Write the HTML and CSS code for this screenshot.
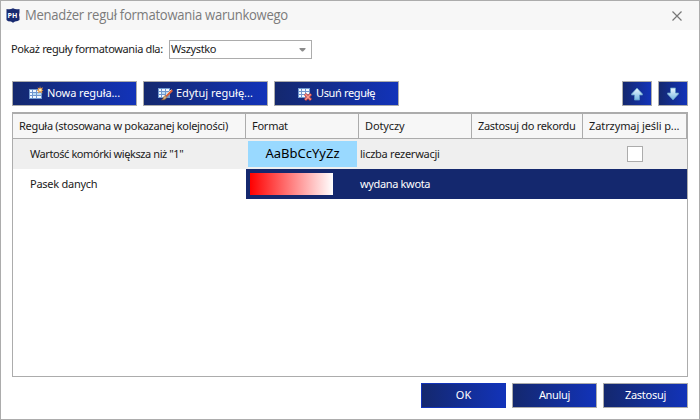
FILE: index.html
```
<!DOCTYPE html>
<html lang="pl">
<head>
<meta charset="utf-8">
<title>Menadżer reguł formatowania warunkowego</title>
<link rel="stylesheet" href="styles.css">
</head>
<body>
<div class="window">
  <header class="titlebar">
    <svg class="logo" width="14" height="15" viewBox="0 0 14 15"><path d="M.5 1Q4 2 7 .3Q10 2 13.500 1V4.500Q12.600 7 13.500 9V12Q12 13.300 9 13.500L7 14.700L5 13.500Q1.500 13.500 .5 12V2Z" fill="#182a70"/><text x="1.500" y="9.600" class="logo-text">PH</text></svg>
    <h1 class="title">Menadżer reguł formatowania warunkowego</h1>
    <svg class="close" width="10" height="10" viewBox="0 0 10 10"><path d="M.5 .5L9.500 9.500M9.500 .5L.5 9.500" stroke="#777" stroke-width="1.200"/></svg>
  </header>
  <div class="filter">
    <div class="filter-label"><span class="t1">Pokaż reguły formatowania dla:</span></div>
    <div class="select"><span class="t2">Wszystko</span><svg width="7" height="4" viewBox="0 0 7 4"><path d="M.5 0H6.500V1L4 3.500H3L.5 1Z" fill="#8b8b8b"/></svg></div>
  </div>
  <div class="toolbar">
    <button class="btn tool b1"><svg width="16" height="16" viewBox="0 0 16 16"><path d="M1 3H14V13H1Z" fill="#7097ce"/><path d="M2 4H4V6H2ZM5 4H8V6H5ZM9 4H13V6H9ZM2 7H4V9H2ZM2 10H4V12H2ZM5 10H8V12H5ZM9 10H13V12H9Z" fill="#f1f8ff"/><path d="M5 7H8V9H5ZM9 7H13V9H9Z" fill="#b9dcf7"/><path d="M12 0L12.700 2.300L15 1.300L14 3.500L15.500 4.500L14 5L14.500 7.500L12 6L10 7.500L10.500 5L8.500 4.500L10.300 3.500L9.500 1.500L11.500 2.300Z" fill="#e69a48"/><circle cx="12.300" cy="4" r="1.300" fill="#fff0b0"/></svg><span class="t3">Nowa reguła...</span></button>
    <button class="btn tool b2"><svg width="16" height="16" viewBox="0 0 16 16"><path d="M1 2H13V12H1Z" fill="#7097ce"/><path d="M2 3H4V5H2ZM5 3H8V5H5ZM9 3H12V5H9ZM2 6H4V8H2ZM2 9H4V11H2ZM5 9H8V11H5Z" fill="#f1f8ff"/><path d="M5 6H8V8H5ZM9 6H12V8H9Z" fill="#b9dcf7"/><path d="M14.500 3.500L16 5L10 11L8.500 9.500Z" fill="#d85e3b"/><path d="M14.500 3.500L9 9" stroke="#ffc39a"/><path d="M8 9.500L10 11.500Q8 14.500 4.500 14Q6.500 13 6.500 11Z" fill="#d5aa70" stroke="#80502d" stroke-width=".5"/></svg><span class="t4">Edytuj regułę...</span></button>
    <button class="btn tool b3"><svg width="16" height="16" viewBox="0 0 16 16"><path d="M1 2H13V12H1Z" fill="#7097ce"/><path d="M2 3H4V5H2ZM5 3H8V5H5ZM9 3H12V5H9ZM2 6H4V8H2ZM5 6H8V8H5ZM9 6H12V8H9ZM2 9H4V11H2ZM5 9H8V11H5Z" fill="#f1f8ff"/><path d="M8 8L14 14M14 8L8 14" stroke="#c9403a" stroke-width="3"/><path d="M8.300 8.300L13.700 13.700M13.700 8.300L8.300 13.700" stroke="#f59a90" stroke-width="1.400"/></svg><span class="t5">Usuń regułę</span></button>
    <span class="spacer"></span>
    <button class="btn arrow" aria-label="W górę"><svg width="14" height="16" viewBox="0 0 14 16"><defs><linearGradient id="a" x2="0" y2="1"><stop stop-color="#eefaff"/><stop offset="1" stop-color="#75b7e2"/></linearGradient></defs><path d="M7 2L12.500 8V9H9.500V14H4.500V9H1.500V8Z" fill="url(#a)" stroke="#5f9bc7" stroke-width=".8"/></svg></button>
    <button class="btn arrow" aria-label="W dół"><svg width="14" height="16" viewBox="0 0 14 16"><path d="M7 14L12.500 8V7H9.500V2H4.500V7H1.500V8Z" fill="url(#a)" stroke="#5f9bc7" stroke-width=".8"/></svg></button>
  </div>
  <main class="grid">
    <div class="row head">
      <div><span class="t6">Reguła (stosowana w pokazanej kolejności)</span></div><div><span class="t7">Format</span></div><div><span class="t8">Dotyczy</span></div><div><span class="t9">Zastosuj do rekordu</span></div><div><span class="t10">Zatrzymaj jeśli p...</span></div>
    </div>
    <div class="row odd">
      <div class="name"><span class="t11">Wartość komórki większa niż "1"</span></div><div class="fmt"><div class="sample">AaBbCcYyZz</div></div><div class="applies"><span class="t12">liczba rezerwacji</span></div><div></div><div class="check"><i class="box"></i></div>
    </div>
    <div class="row selected">
      <div class="name"><span class="t13">Pasek danych</span></div><div class="fmt"><div class="bar"></div></div><div class="applies"><span class="t14">wydana kwota</span></div><div></div><div></div>
    </div>
  </main>
  <footer class="actions">
    <button class="btn ok"><span class="t15">OK</span></button><button class="btn"><span class="t16">Anuluj</span></button><button class="btn"><span class="t17">Zastosuj</span></button>
  </footer>
</div>
</body>
</html>
```
FILE: styles.css
```
* { box-sizing: border-box; }
body { margin: 0; }
.window { width: 700px; height: 420px; border: 1px solid #acacac; background: #fff; font: 11px/14px "Noto Sans", sans-serif; color: #1b1b1b; display: flex; flex-direction: column; overflow: hidden; white-space: nowrap; }
.titlebar { height: 29px; background: #f7f7f7; display: flex; align-items: center; padding: 0 17px 0 5px; }
.logo-text { font: bold 7px "Open Sans", sans-serif; fill: #fff; }
.logo { margin-top: -1px; }
.title { margin: 0 auto 2px 5px; font: 14.5px/20px "Open Sans", sans-serif; letter-spacing: -0.3px; transform: scaleX(.9); transform-origin: left; color: #7b7b7b; }
.filter { display: flex; align-items: center; margin-top: 10px; padding-left: 10px; height: 19px; }
.filter-label { width: 158px; padding-bottom: 2px; }
.select { width: 143px; height: 19px; border: 1px solid #acacac; display: flex; align-items: center; justify-content: space-between; padding: 0 5px 0 1px; }
.select span, .btn span { padding-bottom: 2px; }
.toolbar { display: flex; gap: 6px; margin: 22px 11px 6px; height: 25px; }
.spacer { flex: 1; }
.btn { display: flex; align-items: center; justify-content: center; border: 1px solid #acacac; background: linear-gradient(90deg, #14286e, #1233b9); color: #fff; font: inherit; padding: 0; height: 25px; width: 85px; flex: none; }
.tool { width: 125px; justify-content: flex-start; gap: 3px; }
.b1 { padding-left: 15px; }
.b2 { padding-left: 13px; }
.b3 { padding-left: 22px; }
.arrow { width: 30px; }
.grid { margin: 0 11px; height: 265px; border: 1px solid #acacac; border-top-width: 2px; }
.row { display: grid; grid-template-columns: 233px 113px 113px 111px 104px; height: 30px; }
.row > div { display: flex; align-items: center; min-width: 0; }
.head { height: 25px; background: #f7f7f7; border-bottom: 1px solid #acacac; }
.head > div { border-right: 1px solid #acacac; padding-left: 6px; }
.odd { background: #efefef; }
.row > .name { padding-left: 17px; }
.row > .fmt { padding-left: 2px; }
.sample { width: 109px; height: 26px; background: #99d9ff; color: #000; font: 13px/25px "Noto Sans", sans-serif; text-align: center; }
.row > .applies { padding-left: 1px; }
.row > .check { justify-content: center; }
.box { width: 16px; height: 16px; border: 1px solid #acacac; background: #fff; }
.selected > div:not(.name) { background: #14286e; color: #fff; }
.bar { width: 83px; height: 22px; margin-left: 2px; background: linear-gradient(90deg, #f00, #fff); }
.actions { display: flex; justify-content: flex-end; gap: 6px; margin: 6px 11px 0; }
.ok { border-color: #1233b9; }
.t1 { letter-spacing: -0.37px; }
.t2, .t5, .t14 { letter-spacing: -0.35px; }
.t3, .t8, .t10 { letter-spacing: -0.1px; }
.t6, .t9, .t16 { letter-spacing: -0.31px; }
.t7, .t12, .t13, .t17 { letter-spacing: -0.26px; }
.t11 { letter-spacing: -0.42px; }
```
